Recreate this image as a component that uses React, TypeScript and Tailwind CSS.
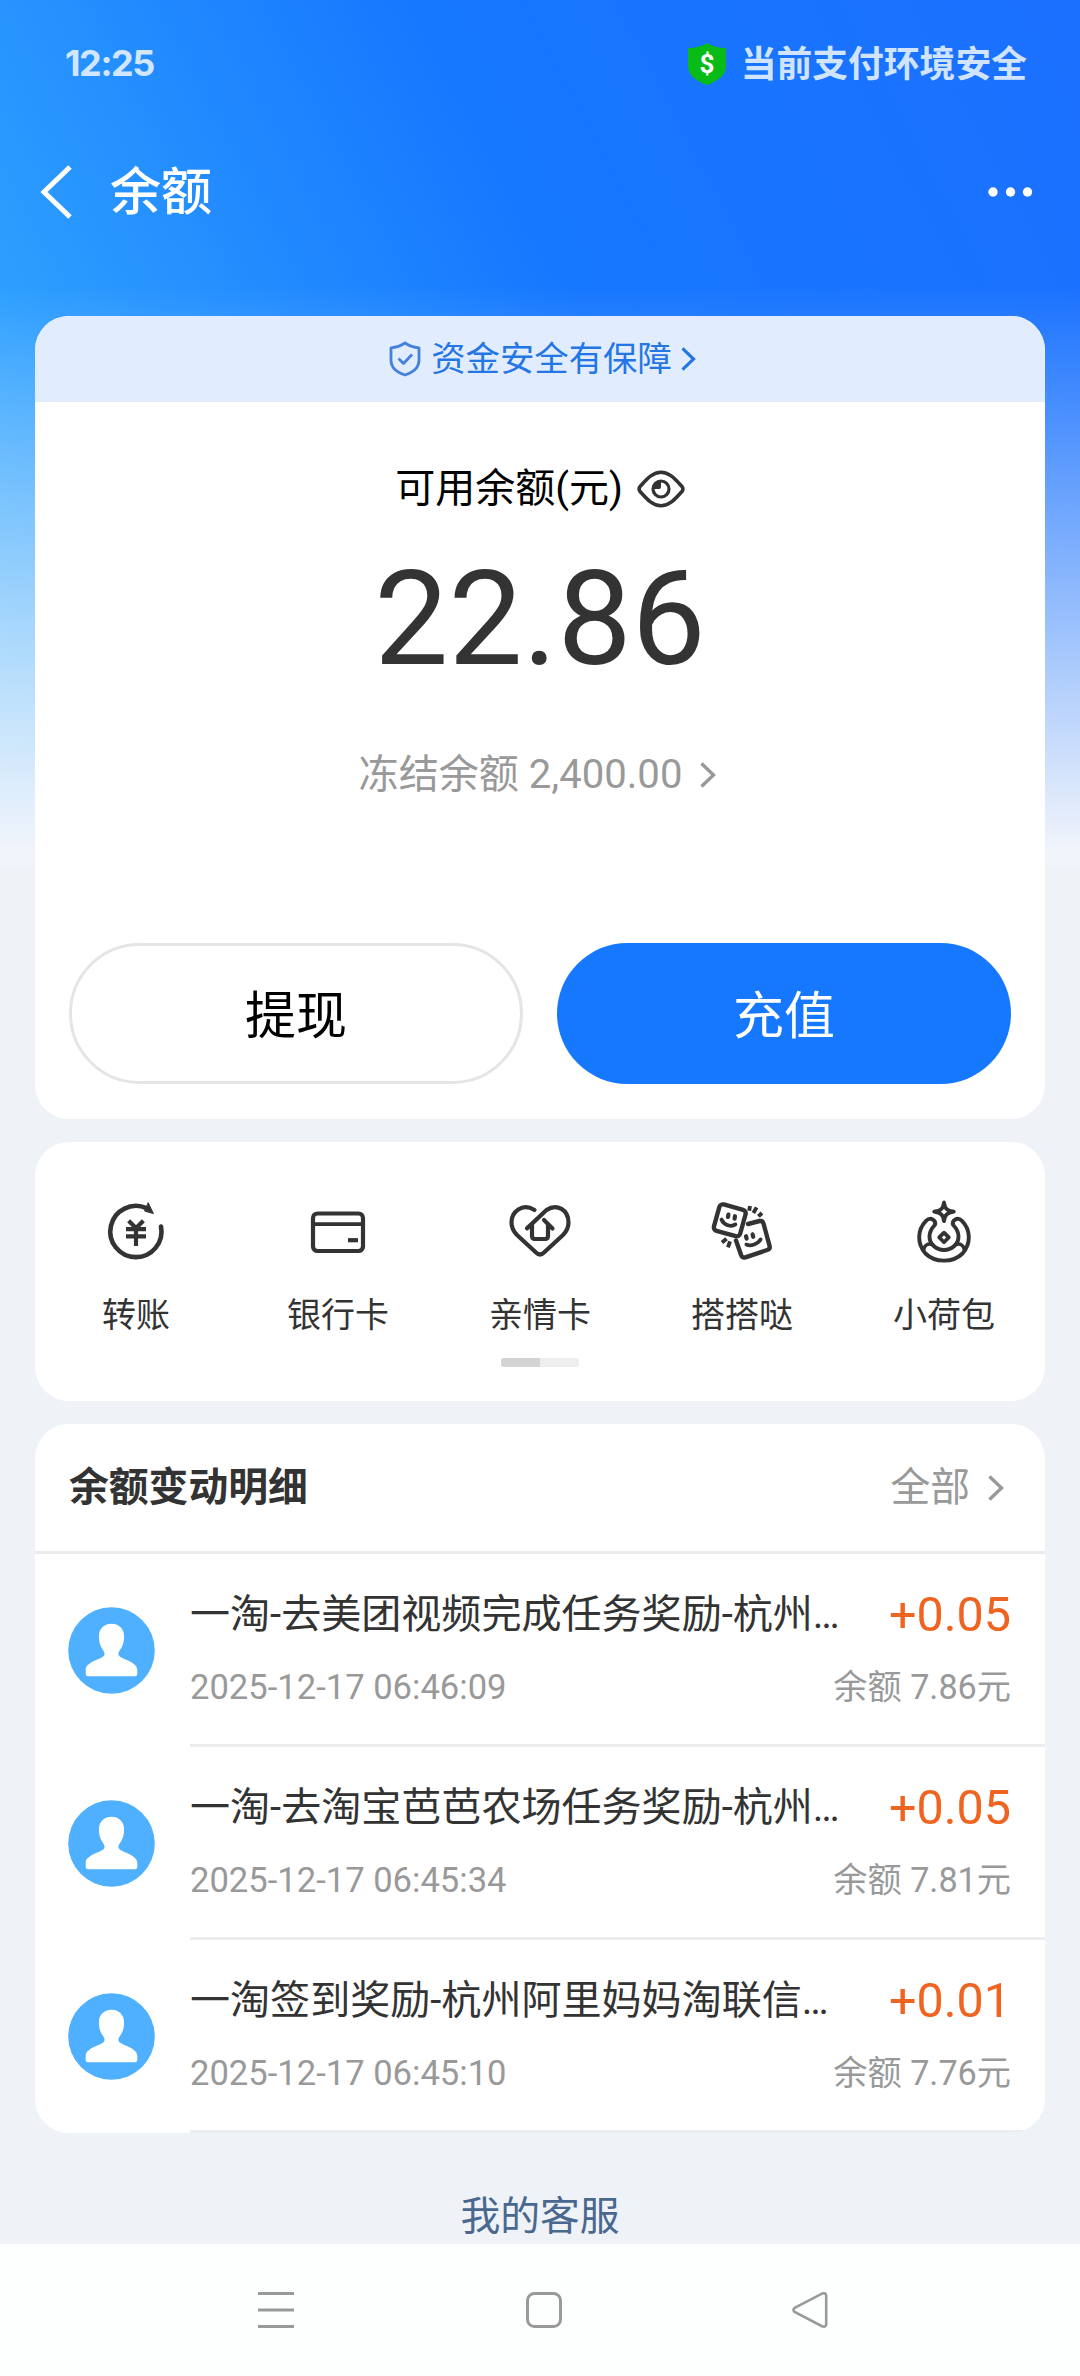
import type { ReactNode } from "react";

const actions: { label: string; icon: ReactNode }[] = [
  {
    label: "转账",
    icon: (
      <>
        <path d="M25 -5.5A25.6 25.6 0 1 1 10.5 -23.8" strokeWidth={4.6} />
        <path d="M12.3 -29L17.4 -18.4L9 -20.8Z" fill="#333" strokeWidth={1} />
        <path d="M-7.4 -11.2L0 -4L7.4 -11.2M0 -4V14M-10 -2.8H10M-10 4.4H10" strokeWidth={4.2} strokeLinecap="butt" />
      </>
    ),
  },
  {
    label: "银行卡",
    icon: (
      <>
        <rect x={-25} y={-18.5} width={50} height={37.5} rx={4.5} strokeWidth={4.2} />
        <path d="M-25 -7.8H25" strokeWidth={3.8} />
        <path d="M10 8.2H20" strokeWidth={4.2} strokeLinecap="butt" />
      </>
    ),
  },
  {
    label: "亲情卡",
    icon: (
      <>
        <path
          d="M-5.5 -22C-18 -29.5 -28.5 -20 -28.5 -9.5C-28.5 -4 -26.5 -0.5 -23 3L-4 20.5Q0 24.5 4 20.5L23 3C26.5 -0.5 28.5 -4 28.5 -9.5C28.5 -22 17 -29 6.5 -22L-13 -3.6"
          strokeWidth={4.2}
        />
        <path d="M4 -12L12.5 -3.6M-8 -7V4Q-8 7 -5 7H5Q8 7 8 4V-7" strokeWidth={4.2} />
      </>
    ),
  },
  {
    label: "搭搭哒",
    icon: (
      <>
        <rect x={-13.4} y={-13.6} width={27.2} height={27.4} rx={3.6} transform="translate(-12.4 -11.8) rotate(15.5)" strokeWidth={4.4} />
        <path d="M-13.6 -17.4L-14 -15M-7 -15.8L-7.4 -13.4" strokeWidth={4.2} />
        <path d="M-20.5 -12.4C-18 -7 -11 -4.5 -6.6 -7.6" strokeWidth={3.8} />
        <path d="M6 -8L17.5 -11Q20.6 -11.6 21.5 -8.5L27.6 14Q28.3 17 25.2 18L3.4 25.4Q0.4 26.2 -0.8 23.2L-6 8.5" strokeWidth={4.4} />
        <path d="M4 4.2L4.6 6.6M10.6 2.4L11.2 4.8" strokeWidth={4.2} />
        <path d="M4.4 12.6C9 14.6 16 12 18.6 7.4" strokeWidth={3.8} />
        <path
          d="M8 -26L7.2 -21.2M14.6 -24.6L11.4 -19M20 -19L16.4 -15.6M-15.4 6.8L-20 10.6M-12 9.3L-14 15.4"
          strokeWidth={3.9}
          strokeLinecap="butt"
        />
      </>
    ),
  },
  {
    label: "小荷包",
    icon: (
      <>
        <path d="M0 -29.5C1 -23 3 -21.5 9.8 -20.3C3 -19 1 -17.5 0 -10.8C-1 -17.5 -3 -19 -9.8 -20.3C-3 -21.5 -1 -23 0 -29.5Z" strokeWidth={3.8} />
        <path
          d="M-9.2 -7C-14 -2 -14.5 1 -14.5 4.5A14.5 13.5 0 0 0 14.5 4.5C14.5 1 14 -2 9.2 -7C7.5 -11 13 -16 18 -11.2C27 -2 27 12 18.5 21.5C9 31 -9 31 -18.5 21.5C-27 12 -27 -2 -18 -11.2C-13 -16 -7.5 -11 -9.2 -7Z"
          strokeWidth={3.9}
        />
        <path d="M-20.5 18.5C-20 13 -15.5 11 -12.5 12.5M20.5 18.5C20 13 15.5 11 12.5 12.5" strokeWidth={3.5} />
        <path d="M0 0.6L4.8 5.4L0 10.2L-4.8 5.4Z" strokeWidth={3.7} />
      </>
    ),
  },
];

const records = [
  { title: "一淘-去美团视频完成任务奖励-杭州…", time: "2025-12-17 06:46:09", amount: "+0.05", balance: "余额 7.86元" },
  { title: "一淘-去淘宝芭芭农场任务奖励-杭州…", time: "2025-12-17 06:45:34", amount: "+0.05", balance: "余额 7.81元" },
  { title: "一淘签到奖励-杭州阿里妈妈淘联信…", time: "2025-12-17 06:45:10", amount: "+0.01", balance: "余额 7.76元" },
];

function Chevron({ className }: { className: string }) {
  return (
    <svg viewBox="0 0 18 26" fill="none" stroke="currentColor" strokeWidth={3.4} className={className}>
      <path d="M2.5 1.5L14.5 13L2.5 24.5" />
    </svg>
  );
}

function StatusBar() {
  return (
    <div className="flex h-[126px] items-center justify-between pr-[53px] pl-[65px]">
      <span className="font-['Inter'] text-[36px] leading-[44px] font-bold tracking-[-1.4px] text-[#d2e7ff]">12:25</span>
      <div className="flex items-center gap-[15px]">
        <svg viewBox="0 0 38 42" className="mt-px h-[42px] w-[38px]">
          <path d="M19 0C24 3.5 31 5 38 5V23C38 32 30 38 19 42C8 38 0 32 0 23V5C7 5 14 3.5 19 0Z" fill="#09bb16" />
          <text x={19} y={29.5} textAnchor="middle" fill="#fff" fontSize={26} fontWeight={700} fontFamily="Roboto, sans-serif">
            $
          </text>
        </svg>
        <span className="pt-[3px] text-[35.8px] leading-[44px] font-bold text-[#d0e3ff]">当前支付环境安全</span>
      </div>
    </div>
  );
}

function TitleBar() {
  return (
    <div className="flex h-[132px] items-center pr-[47px] pl-[39px]">
      <svg viewBox="0 0 34 54" fill="none" stroke="#fff" strokeWidth={5} className="h-[54px] w-[34px]">
        <path d="M31 2L5 27L31 52" />
      </svg>
      <h1 className="ml-[37px] flex-1 pt-px text-[51px] leading-[60px] font-medium text-white">余额</h1>
      <svg viewBox="0 0 46 12" fill="#fff" className="h-3 w-[46px]">
        <circle cx={6} cy={6} r={4.7} />
        <circle cx={23.5} cy={6} r={4.7} />
        <circle cx={40.5} cy={6} r={4.7} />
      </svg>
    </div>
  );
}

function BalanceCard() {
  return (
    <section className="flex h-[803px] flex-col overflow-hidden rounded-[34px] bg-white">
      <div className="flex h-[86px] shrink-0 items-center justify-center bg-[#e1edfe] pl-[6px] text-[#2476e4]">
        <svg viewBox="0 0 32 36" fill="none" stroke="#4580de" strokeWidth={2.8} strokeLinejoin="round" className="h-9 w-8">
          <path d="M16 2C20.5 5 25 6.4 30 6.8V19C30 26.5 24 31.5 16 34C8 31.5 2 26.5 2 19V6.8C7 6.4 11.5 5 16 2Z" />
          <path d="M9.5 17.5L14.5 22.5L23 13.5" />
        </svg>
        <span className="ml-2.5 text-[34.4px] leading-[44px]">资金安全有保障</span>
        <Chevron className="ml-2 h-[24px] w-[17px]" />
      </div>
      <div className="mt-[62px] flex h-[50px] items-center justify-center">
        <span className="text-[40px] leading-[50px] text-black">可用余额(元)</span>
        <svg viewBox="0 0 48 38" fill="none" stroke="#333" strokeWidth={3.6} strokeLinejoin="round" className="ml-3.5 h-[38px] w-12">
          <path d="M3 21.5Q1.2 19 3 16.5C9 10 15 2.2 24 2.2C33 2.2 39 10 45 16.5Q46.8 19 45 21.5C39 28 33 35.8 24 35.8C15 35.8 9 28 3 21.5Z" />
          <circle cx={24} cy={19} r={8} strokeWidth={3.2} />
          <path d="M24 11A8 8 0 0 0 16 19H22Q24 19 24 17Z" fill="#333" stroke="none" />
        </svg>
      </div>
      <div className="mt-[30px] text-center text-[132px] leading-[150px] text-[#333]">22.86</div>
      <div className="mt-[56px] flex h-[50px] items-center justify-center pr-[4px] text-[#999]">
        <span className="text-[40.1px] leading-[50px]">冻结余额 2,400.00</span>
        <Chevron className="ml-[17px] h-[26px] w-[18px]" />
      </div>
      <div className="mt-auto grid grid-cols-2 gap-[34px] px-[34px] pb-[35px]">
        <button className="h-[141px] rounded-full border-[3px] border-[#e5e5e5] bg-white pt-[7px] text-[51px] leading-[60px] text-black">提现</button>
        <button className="h-[141px] rounded-full bg-[#1677ff] pt-[7px] text-[51px] leading-[60px] text-white">充值</button>
      </div>
    </section>
  );
}

function ActionsCard() {
  return (
    <section className="mt-[23px] flex h-[259px] flex-col items-center rounded-[34px] bg-white">
      <div className="grid w-full grid-cols-5 pt-[54px]">
        {actions.map((action) => (
          <div key={action.label} className="flex flex-col items-center">
            <svg viewBox="-36 -36 72 72" fill="none" stroke="#333" strokeLinecap="round" strokeLinejoin="round" className="h-[72px] w-[72px]">
              {action.icon}
            </svg>
            <span className="mt-[25px] text-[34px] leading-[44px] text-[#333]">{action.label}</span>
          </div>
        ))}
      </div>
      <div className="mt-[21px] h-[9px] w-[78px] overflow-hidden rounded-[3px] bg-[#eee]">
        <div className="h-full w-1/2 bg-[#d4d4d4]" />
      </div>
    </section>
  );
}

function RecordsCard() {
  return (
    <section className="mt-[23px] overflow-hidden rounded-[34px] bg-white">
      <div className="flex h-[130px] items-center border-b-[3px] border-[#ebebeb] pr-[40px] pl-[34px]">
        <h2 className="flex-1 text-[39.8px] leading-[50px] font-bold text-[#333]">余额变动明细</h2>
        <span className="text-[39.8px] leading-[50px] text-[#999]">全部</span>
        <Chevron className="ml-[17px] h-[26px] w-[18px] text-[#999]" />
      </div>
      {records.map((record) => (
        <div key={record.time} className="flex h-[193px]">
          <div className="w-[155px] shrink-0 pt-[53px] pl-[33px]">
            <svg viewBox="-43.5 -43.5 87 87" className="h-[87px] w-[87px]">
              <circle r={43.3} fill="#4fb0ff" />
              <path
                d="M-25.8 23.5V19.5C-25.8 11 -10 9 -7.4 5C-6 2 -8 0.5 -9.8 -2.6C-11.8 -6 -12.6 -10 -12.6 -14C-12.6 -22 -7 -26.7 0 -26.7C7 -26.7 12.6 -22 12.6 -14C12.6 -10 11.8 -6 9.8 -2.6C8 0.5 6 2 7.4 5C10 9 25.8 11 25.8 19.5V23.5Q25.8 25.7 23.6 25.7H-23.6Q-25.8 25.7 -25.8 23.5Z"
                fill="#fff"
              />
            </svg>
          </div>
          <div className="flex flex-1 flex-col border-b-[3px] border-[#ededf0] pt-[34px] pr-[34px]">
            <div className="flex h-[54px] items-center justify-between">
              <span className="text-[40.05px] leading-[54px] whitespace-nowrap text-[#333]">{record.title}</span>
              <span className="text-[48.5px] leading-[54px] text-[#ee6420]">{record.amount}</span>
            </div>
            <div className="mt-[23px] flex h-11 items-center justify-between text-[#999]">
              <span className="text-[34.6px] leading-[44px]">{record.time}</span>
              <span className="text-[34.2px] leading-[44px]">{record.balance}</span>
            </div>
          </div>
        </div>
      ))}
    </section>
  );
}

function SystemNav() {
  return (
    <nav className="flex h-[132px] items-center bg-[#fdfefe] pl-[256px]">
      <svg viewBox="0 0 40 40" stroke="#999" strokeWidth={3} className="h-10 w-10">
        <path d="M2 3.5H38M2 20H38M2 36.5H38" />
      </svg>
      <svg viewBox="0 0 40 40" fill="none" stroke="#999" strokeWidth={3} className="ml-[228px] h-10 w-10">
        <rect x={3.5} y={3.5} width={33} height={33} rx={7} />
      </svg>
      <svg viewBox="0 0 40 40" fill="none" stroke="#999" strokeWidth={2.6} className="ml-[227px] h-10 w-10">
        <path d="M3.6 17.8L31 3.6Q35.2 2.2 35.2 6V34Q35.2 37.6 31 36.2L3.6 22Q1.4 20 3.6 17.8Z" />
      </svg>
    </nav>
  );
}

export default function App() {
  return (
    <div className="flex h-[2376px] w-[1080px] flex-col overflow-hidden bg-[#eff2f7] font-['Roboto','Noto_Sans_CJK_SC',sans-serif]">
      <div className="h-[2244px] overflow-hidden bg-[linear-gradient(180deg,rgba(241,244,251,0)_0%,rgba(241,244,251,0)_33%,rgba(241,244,251,1)_98%),linear-gradient(62deg,#3ab4ff_0%,#1677ff_57%,#1c70ff_100%)] bg-[length:1080px_867px] bg-no-repeat">
        <StatusBar />
        <TitleBar />
        <main className="px-[35px] pt-[58px]">
          <BalanceCard />
          <ActionsCard />
          <RecordsCard />
          <p className="mt-[59px] text-center text-[39.8px] leading-[50px] text-[#49688f]">我的客服</p>
        </main>
      </div>
      <SystemNav />
    </div>
  );
}
